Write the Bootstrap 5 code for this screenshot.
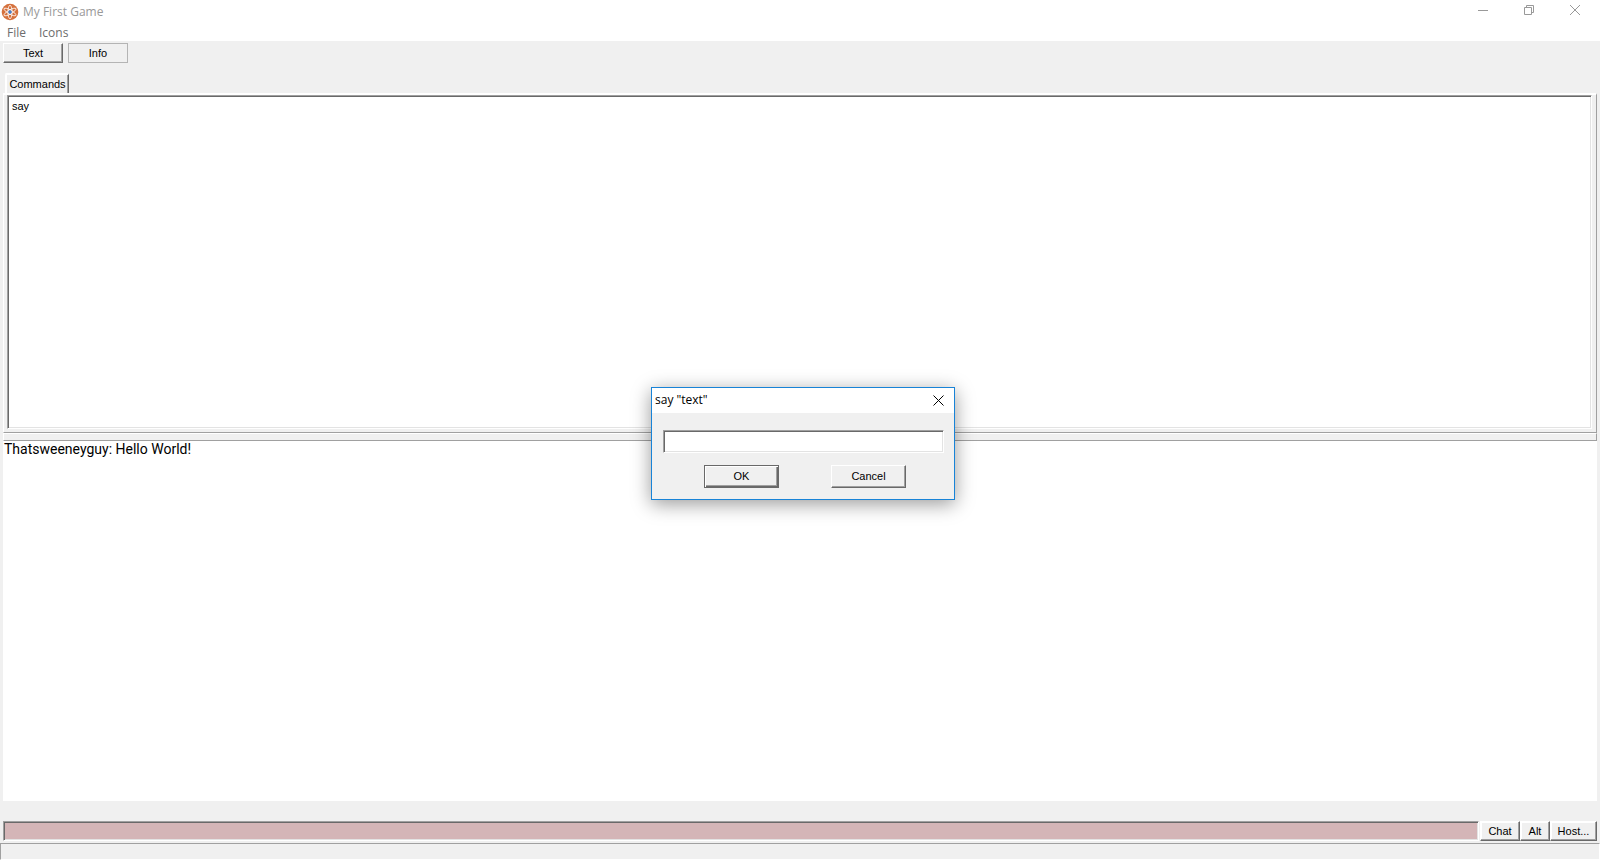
<!DOCTYPE html>
<html lang="en">
<head>
<meta charset="utf-8">
<meta name="viewport" content="width=device-width, initial-scale=1">
<title>My First Game</title>
<link rel="stylesheet" href="https://cdn.jsdelivr.net/npm/bootstrap@5.3.0/dist/css/bootstrap.min.css">
<style>
  body { font-family: "Liberation Sans", Arial, sans-serif; font-size: 11px; line-height: 14px; color: #000; background: #f0f0f0; }
  .caption { font-family: "Open Sans", "Noto Sans", sans-serif; font-size: 12px; line-height: 16px; color: #999; height: 23px; padding: 0 2px 0 1px; }
  .menus { font-family: "Open Sans", "Noto Sans", sans-serif; font-size: 12px; line-height: 16px; height: 18px; padding: 2px 7px 0; gap: 13px; }
  .menus a { color: #6d6d6d; }
  .win-ctl { width: 46px; height: 20px; color: #999; }
  .key { font-size: 11px; line-height: 14px; color: #000; background: #f0f0f0; border-radius: 0; padding: 0 0 1px; border: 1px solid; border-color: #fff #696969 #696969 #fff; box-shadow: inset -1px -1px #a0a0a0; height: 20px; }
  .key-wide { width: 60px; }
  .key-flat { border: 1px solid #b4b4b4; box-shadow: none; }
  .key-thick { box-shadow: inset -1px -1px #a0a0a0, inset 1px 1px #fff; }
  .chat-key { width: 40px; }
  .alt-key { width: 30px; }
  .host-key { width: 47px; }
  .toolbar { padding: 2px 3px 10px; gap: 5px; }
  .info-pane { padding: 0 3px; height: 360px; }
  .tab-key { width: 64px; height: 20px; margin-left: 2px; border: 0; border-top: 2px solid #fff; border-left: 2px solid #fff; border-right: 1px solid #696969; border-radius: 2px 2px 0 0; background: #f0f0f0; box-shadow: inset -1px 0 #a0a0a0; padding: 0; font-size: 11px; line-height: 14px; color: #000; }
  .tab-frame { border: 1px solid; border-color: #fff #a0a0a0 #a0a0a0 #fff; border-top-width: 2px; padding: 0 4px 3px 3px; }
  .sunken { background: #fff; border: 1px solid; border-color: #a0a0a0 #fff #fff #a0a0a0; box-shadow: inset 1px 1px #696969, inset -1px -1px #e3e3e3; border-radius: 0; }
  .verb { padding: 3px 4px; }
  .splitter { height: 8px; margin: 0 3px; border: 1px solid; border-color: #fff #a0a0a0 #a0a0a0 #fff; }
  .output { font-family: Roboto, "Liberation Sans", sans-serif; margin: 0 3px; padding: 0 1px; font-size: 14px; line-height: 16px; background: #fff; }
  .entry { padding: 20px 3px 2px; }
  .command { background: #d4b5b7; height: 20px; min-width: 0; margin-right: 1px; }
  .status { height: 17px; border: 1px solid; border-color: #a0a0a0 #fff #fff #a0a0a0; }
  .prompt-box { width: 304px; left: calc(50% - 149px); top: 387px; background: #f0f0f0; border: 1px solid #1883d7; box-shadow: 0 4px 18px rgba(0,0,0,.4); }
  .prompt-title { font-family: "Open Sans", "Noto Sans", sans-serif; font-size: 12px; line-height: 16px; height: 25px; padding: 0 1px 1px 3px; background: #fff; }
  .prompt-title .win-ctl { width: 30px; height: 24px; color: #000; }
  .prompt-body { padding: 17px 11px 11px; }
  .prompt-body .sunken { height: 23px; width: 281px; outline: 0; }
  .prompt-keys { padding: 12px 37px 0 41px; }
  .prompt-keys .key { width: 75px; height: 23px; }
  .key-default { border: 1px solid #696969; box-shadow: inset 1px 1px #fff, inset -1px -1px #696969, inset -2px -2px #a0a0a0; }
</style>
</head>
<body class="vh-100 overflow-hidden d-flex flex-column">
<header class="bg-white">
  <div class="caption d-flex align-items-center">
    <svg width="18" height="18" viewBox="0 0 18 18" class="me-1" aria-hidden="true">
      <circle cx="9" cy="9" r="8.300" fill="#d5713d"/>
      <g fill="none" stroke="#fff" stroke-width=".8"><ellipse cx="9" cy="9" rx="2" ry="6.800"/><ellipse cx="9" cy="9" rx="2" ry="6.800" transform="rotate(60 9 9)"/><ellipse cx="9" cy="9" rx="2" ry="6.800" transform="rotate(120 9 9)"/></g>
      <circle cx="9" cy="9" r="1.700" fill="#3c7fd0"/>
    </svg>
    <span>My First Game</span>
    <div class="ms-auto d-flex align-self-start">
      <button class="win-ctl btn p-0 border-0 d-flex align-items-center justify-content-center" aria-label="Minimize"><svg width="10" height="10"><path d="M0 5.500H10" stroke="currentColor"/></svg></button>
      <button class="win-ctl btn p-0 border-0 d-flex align-items-center justify-content-center" aria-label="Restore"><svg width="10" height="10" fill="none" stroke="currentColor"><path d="M.5 2.500H7.500V9.500H.5ZM2.500 2.500V.5H9.500V7.500H7.500"/></svg></button>
      <button class="win-ctl btn p-0 border-0 d-flex align-items-center justify-content-center" aria-label="Close"><svg width="10" height="10"><path d="M0 0L10 10M10 0L0 10" stroke="currentColor"/></svg></button>
    </div>
  </div>
  <nav class="menus d-flex"><a href="#" class="text-decoration-none">File</a><a href="#" class="text-decoration-none">Icons</a></nav>
</header>
<div class="toolbar d-flex">
  <button class="btn key key-wide">Text</button>
  <button class="btn key key-wide key-flat">Info</button>
</div>
<section class="info-pane d-flex flex-column">
  <button class="tab-key">Commands</button>
  <div class="tab-frame flex-grow-1 d-flex"><div class="sunken verb flex-grow-1">say</div></div>
</section>
<div class="splitter"></div>
<main class="output flex-grow-1">Thatsweeneyguy: Hello World!</main>
<form class="entry d-flex">
  <input type="text" class="sunken command flex-grow-1" aria-label="Command">
  <button type="button" class="btn key key-thick chat-key">Chat</button>
  <button type="button" class="btn key key-thick alt-key">Alt</button>
  <button type="button" class="btn key key-thick host-key">Host...</button>
</form>
<footer class="status"></footer>
<div class="prompt-box position-absolute" role="dialog" aria-labelledby="ask">
  <div class="prompt-title d-flex align-items-center">
    <label id="ask" for="answer">say "text"</label>
    <button class="win-ctl btn p-0 border-0 ms-auto d-flex align-items-center justify-content-center" aria-label="Close dialog"><svg width="11" height="11"><path d="M.5 .5L10.500 10.500M10.500 .5L.5 10.500" stroke="currentColor"/></svg></button>
  </div>
  <form class="prompt-body">
    <input id="answer" type="text" class="sunken d-block">
    <div class="prompt-keys d-flex justify-content-between">
      <button type="button" class="btn key key-default">OK</button>
      <button type="button" class="btn key">Cancel</button>
    </div>
  </form>
</div>
<script src="https://cdn.jsdelivr.net/npm/bootstrap@5.3.0/dist/js/bootstrap.bundle.min.js"></script>
</body>
</html>
